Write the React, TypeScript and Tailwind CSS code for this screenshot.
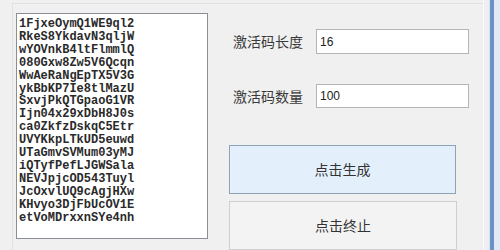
import React from "react";

const codes = [
  "1FjxeOymQ1WE9ql2",
  "RkeS8YkdavN3qljW",
  "wYOVnkB4ltFlmmlQ",
  "080Gxw8Zw5V6Qcqn",
  "WwAeRaNgEpTX5V3G",
  "ykBbKP7Ie8tlMazU",
  "SxvjPkQTGpaoG1VR",
  "Ijn04x29xDbH8J0s",
  "ca0ZkfzDskqC5Etr",
  "UVYKkpLTkUD5euwd",
  "UTaGmvSVMum03yMJ",
  "iQTyfPefLJGWSala",
  "NEVJpjcOD543Tuyl",
  "JcOxvlUQ9cAgjHXw",
  "KHvyo3DjFbUcOV1E",
  "etVoMDrxxnSYe4nh",
];

export default function App() {
  return (
    <div className="w-[500px] h-[250px] bg-[#f0f0f0] overflow-hidden flex">
      <div className="w-[483px] h-full pt-[3px]">
        <div className="h-full border-t border-l border-[#e2e2e2] ml-[12px] flex">
          <div className="pl-[3px] pt-[9px]">
            <div
              className="w-[192px] h-[226px] bg-white border border-[#8a8f96] pl-[2px] pt-[4px] text-[12px] leading-[12.9px] font-bold text-[#2a2a2a]"
              style={{ fontFamily: '"Liberation Mono", monospace' }}
            >
              {codes.map((c) => (
                <div key={c} className="whitespace-pre">{c}</div>
              ))}
            </div>
          </div>
          <div
            className="flex flex-col pt-[25px]"
            style={{ fontFamily: '"Noto Sans CJK SC", "Noto Sans", sans-serif' }}
          >
            <div className="flex items-center h-[25px]">
              <span className="ml-[25px] w-[83px] text-[14px] text-[#3a3a3a]">激活码长度</span>
              <div
                className="w-[153px] h-[25px] bg-white border border-[#b4b4b4] pl-[3px] flex items-center text-[12px] text-[#222]"
                style={{ fontFamily: '"Liberation Sans", sans-serif' }}
              >
                16
              </div>
            </div>
            <div className="flex items-center h-[24px] mt-[30px]">
              <span className="ml-[25px] w-[83px] text-[14px] text-[#3a3a3a]">激活码数量</span>
              <div
                className="w-[153px] h-[24px] bg-white border border-[#b4b4b4] pl-[3px] flex items-center text-[12px] text-[#222]"
                style={{ fontFamily: '"Liberation Sans", sans-serif' }}
              >
                100
              </div>
            </div>
            <div className="ml-[21px] mt-[37px] w-[227px] h-[52px] bg-[#e3f0fb] border border-[#8fa3b8] flex items-center justify-center text-[14px] text-[#333]">
              点击生成
            </div>
            <div className="ml-[21px] mt-[7px] w-[228px] h-[52px] bg-[#f3f3f3] border border-[#cfcfcf] flex items-center justify-center text-[14px] text-[#333]">
              点击终止
            </div>
          </div>
        </div>
      </div>
      <div className="w-[1px] h-full bg-[#fbfbfb]" />
      <div className="w-[5px] h-full bg-[#eeeef3]" />
      <div className="w-[1px] h-full bg-[#d6e2f0]" />
      <div className="w-[4px] h-full bg-[#6b93c7]" />
      <div className="w-[6px] h-full bg-[#e2ebf5]" />
    </div>
  );
}
